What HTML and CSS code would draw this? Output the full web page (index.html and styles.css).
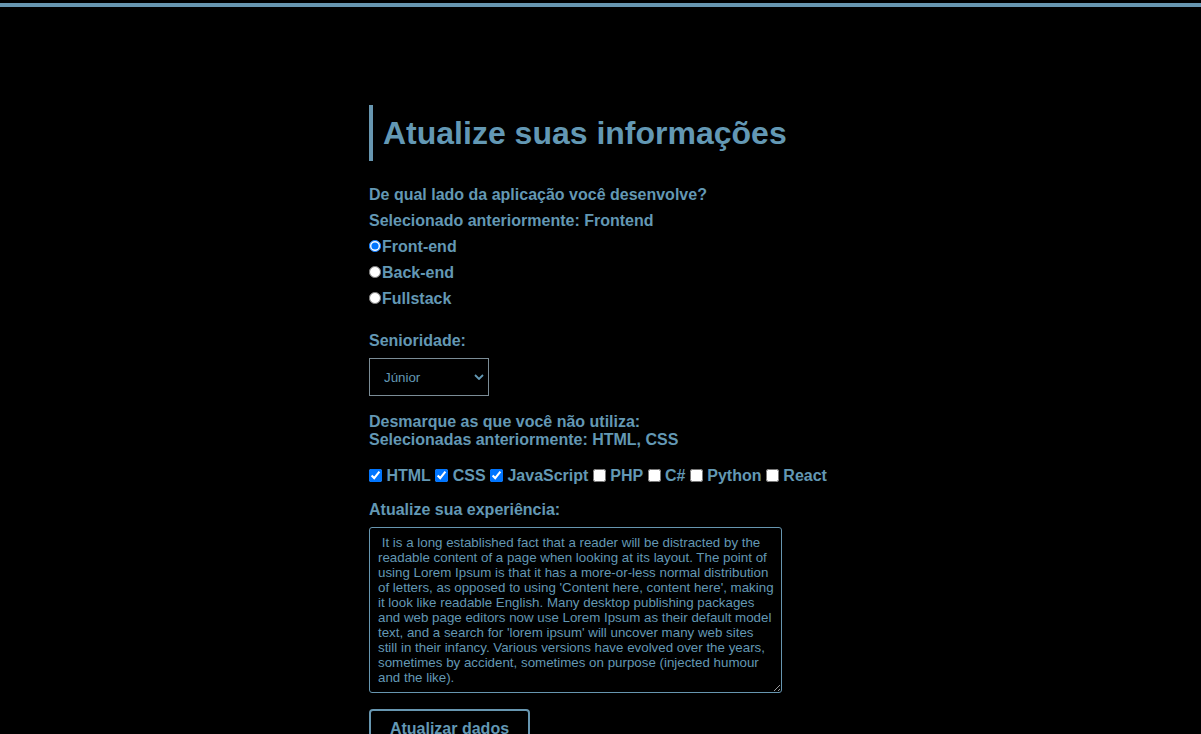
FILE: index.html
```html
<!DOCTYPE html>
<html lang="pt-BR">
<head>
<meta charset="utf-8">
<title>Atualize suas informações</title>
<link rel="stylesheet" href="styles.css">
</head>
<body>
<div class="topbar"></div>
<main class="page">
  <form class="form">
    <h1 class="title">Atualize suas informações</h1>

    <div class="group">
      <p class="line">De qual lado da aplicação você desenvolve?</p>
      <p class="line">Selecionado anteriormente: Frontend</p>
      <label class="line radio"><input type="radio" name="lado" checked>Front-end</label>
      <label class="line radio"><input type="radio" name="lado">Back-end</label>
      <label class="line radio"><input type="radio" name="lado">Fullstack</label>
    </div>

    <div class="group senior">
      <label class="line" for="sen">Senioridade:</label>
      <div class="select-wrap">
        <select id="sen" class="select">
          <option>Júnior</option>
          <option>Pleno</option>
          <option>Sênior</option>
        </select>
        <svg class="chev" width="10" height="6" viewBox="0 0 10 6"><path d="M1 1 L5 5 L9 1" fill="none" stroke="#6398b4" stroke-width="1.8"/></svg>
      </div>
    </div>

    <div class="group techs">
      <p class="tight">Desmarque as que você não utiliza:<br>Selecionadas anteriormente: HTML, CSS</p>
      <div class="checks">
        <label class="check"><input type="checkbox" checked> HTML</label>
        <label class="check"><input type="checkbox" checked> CSS</label>
        <label class="check"><input type="checkbox" checked> JavaScript</label>
        <label class="check"><input type="checkbox"> PHP</label>
        <label class="check"><input type="checkbox"> C#</label>
        <label class="check"><input type="checkbox"> Python</label>
        <label class="check"><input type="checkbox"> React</label>
      </div>
    </div>

    <div class="group exp">
      <label class="line" for="exp">Atualize sua experiência:</label>
      <textarea id="exp" class="textarea"> It is a long established fact that a reader will be distracted by the readable content of a page when looking at its layout. The point of using Lorem Ipsum is that it has a more-or-less normal distribution of letters, as opposed to using 'Content here, content here', making it look like readable English. Many desktop publishing packages and web page editors now use Lorem Ipsum as their default model text, and a search for 'lorem ipsum' will uncover many web sites still in their infancy. Various versions have evolved over the years, sometimes by accident, sometimes on purpose (injected humour and the like).</textarea>
    </div>

    <button type="button" class="btn">Atualizar dados</button>
  </form>
</main>
</body>
</html>
```

FILE: styles.css
```css
html, body {
  margin: 0;
  padding: 0;
  background: #000;
}

body {
  font-family: "Liberation Sans", Arial, sans-serif;
  color: #6398b4;
  font-weight: bold;
  font-size: 16px;
  padding-top: 3px;
}

.topbar {
  height: 4px;
  background: #6796b0;
}

.page {
  display: flex;
  justify-content: center;
}

.form {
  width: 463px;
  padding-top: 98px;
  display: flex;
  flex-direction: column;
}

.title {
  margin: 0 0 21px 0;
  border-left: 4px solid #6796b0;
  padding: 9px 0 9px 10px;
  font-size: 32px;
  line-height: 38px;
  color: #6398b4;
}

.group {
  display: flex;
  flex-direction: column;
}

.line {
  margin: 0;
  height: 26px;
  line-height: 26px;
  display: flex;
  align-items: center;
}

.radio input {
  margin: 0 1px 2px 0;
  width: 12px;
  height: 12px;
}

.senior {
  margin-top: 16px;
}

.select-wrap {
  position: relative;
  margin-top: 4px;
  width: 120px;
  height: 38px;
}

.select {
  width: 120px;
  height: 38px;
  appearance: none;
  -webkit-appearance: none;
  background: #000;
  color: #6398b4;
  border: 1px solid #7b8c96;
  border-radius: 0;
  font-family: "Liberation Sans", Arial, sans-serif;
  font-size: 13.333px;
  padding: 0 8px 0 14px;
}

.chev {
  position: absolute;
  left: 105px;
  top: 16px;
  pointer-events: none;
}

.techs {
  margin-top: 17px;
}

.tight {
  margin: 0;
  line-height: 18px;
}

.checks {
  margin-top: 17px;
  display: flex;
  flex-wrap: wrap;
  gap: 0 4.4px;
  line-height: 20px;
}

.check {
  display: flex;
  align-items: center;
  white-space: pre;
}

.check input {
  margin: 0 0 1px 0;
  width: 13px;
  height: 13px;
}

.exp {
  margin-top: 11px;
}

.textarea {
  margin-top: 4px;
  width: 413px;
  height: 166px;
  box-sizing: border-box;
  background: #000;
  color: #6398b4;
  border: 1px solid #6796b0;
  border-radius: 3px;
  font-family: "Liberation Sans", Arial, sans-serif;
  font-size: 13.333px;
  line-height: 15px;
  padding: 7px 6px 7px 8px;
  resize: vertical;
}

.btn {
  margin-top: 16px;
  width: 161px;
  height: 40px;
  align-self: flex-start;
  background: #000;
  color: #6398b4;
  border: 2px solid #6796b0;
  border-radius: 4px;
  font-family: "Liberation Sans", Arial, sans-serif;
  font-weight: bold;
  font-size: 16px;
  padding: 0;
}
```
